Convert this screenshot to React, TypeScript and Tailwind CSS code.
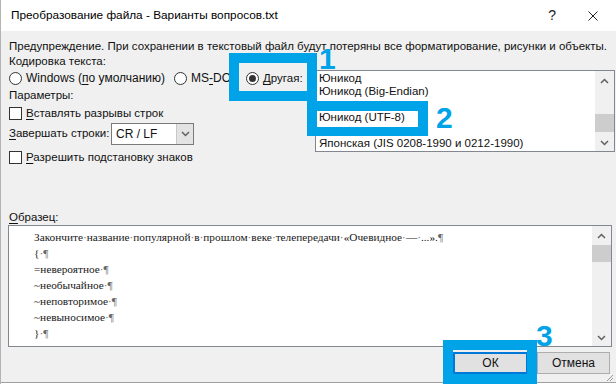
import React from 'react'

const sans = { fontFamily: '"Liberation Sans", Arial, sans-serif' }
const serif = { fontFamily: '"Liberation Serif", "Times New Roman", serif' }

const U: React.FC<{ children: React.ReactNode }> = ({ children }) => (
    <span className="underline underline-offset-[2px] decoration-1">{children}</span>
)

const Radio: React.FC<{ checked?: boolean }> = ({ checked }) => (
    <span className="w-[13px] h-[13px] rounded-full border border-[#333] bg-white flex items-center justify-center shrink-0">
        {checked && <span className="w-[7px] h-[7px] rounded-full bg-[#333]" />}
    </span>
)

const Checkbox: React.FC = () => (
    <span className="w-[13px] h-[13px] border border-[#333] bg-white shrink-0" />
)

const Chevron: React.FC<{ up?: boolean }> = ({ up }) => (
    <svg width="9" height="6" viewBox="0 0 9 6">
        <path d={up ? 'M1 5 L4.5 1.5 L8 5' : 'M1 1 L4.5 4.5 L8 1'} stroke="#606060" strokeWidth="1.5" fill="none" />
    </svg>
)

// word-style formatting marks in grey
const Marks: React.FC<{ text: string }> = ({ text }) => (
    <>
        {text.split(/([·¶])/).map((part, i) =>
            part === '·' || part === '¶'
                ? <span key={i} className="text-[#666]">{part}</span>
                : <span key={i}>{part}</span>
        )}
    </>
)

const sample = [
    'Закончите·название·популярной·в·прошлом·веке·телепередачи·«Очевидное·—·...».¶',
    '{·¶',
    '=невероятное·¶',
    '~необычайное·¶',
    '~неповторимое·¶',
    '~невыносимое·¶',
    '}·¶',
    '¶',
]

const App: React.FC = () => {
    return (
        <div className="w-[616px] h-[384px] relative bg-white flex flex-col overflow-hidden border-l border-[#b4b4b4] text-[11.5px] text-[#111]" style={sans}>
            {/* title bar */}
            <div className="h-[31px] shrink-0 flex items-center pl-[10px] bg-white">
                <p className="text-[11.8px] text-black">Преобразование файла - Варианты вопросов.txt</p>
                <span className="ml-auto text-[14px] text-[#222] mr-[32px]">?</span>
                <svg width="10" height="10" viewBox="0 0 10 10" className="mr-[18px]">
                    <path d="M0.5 0.5 L9.5 9.5 M9.5 0.5 L0.5 9.5" stroke="#222" strokeWidth="1" />
                </svg>
            </div>

            {/* body */}
            <div className="h-[352px] shrink-0 bg-[#f0f0f0] border-b border-[#a0a0a0] flex flex-col pl-[8px]">
                <p className="mt-[8px] h-[14px] leading-[14px] whitespace-nowrap">Предупреждение. При сохранении в текстовый файл будут потеряны все форматирование, рисунки и объекты.</p>
                <p className="mt-[1px] h-[14px] leading-[14px]">Кодировка текста:</p>

                <div className="mt-[2px] flex items-start">
                    <div className="w-[306px] pt-[1px] flex flex-col">
                        <div className="h-[14px] flex items-center leading-[14px] whitespace-nowrap">
                            <div className="w-[165px] flex items-center gap-[4px]">
                                <Radio />
                                <span className="text-[12px]">Windows (<U>п</U>о умолчанию)</span>
                            </div>
                            <div className="w-[72px] flex items-center gap-[4px]">
                                <Radio />
                                <span className="text-[12px]">MS<U>-</U>DOS</span>
                            </div>
                            <div className="flex items-center gap-[4px]">
                                <Radio checked />
                                <span><U>Д</U>ругая:</span>
                            </div>
                        </div>
                        <p className="mt-[3px] h-[14px] leading-[14px]">Параметры:</p>
                        <div className="mt-[4px] h-[14px] flex items-center gap-[4px] leading-[14px]">
                            <Checkbox />
                            <span><U>В</U>ставлять разрывы строк</span>
                        </div>
                        <div className="mt-[3px] h-[22px] flex items-center whitespace-nowrap">
                            <span className="w-[102px] shrink-0"><U>З</U>авершать строки:</span>
                            <div className="w-[83px] h-[22px] border border-[#7a7a7a] bg-white flex items-center">
                                <span className="pl-[4px] flex-1 text-[12px]">CR / LF</span>
                                <span className="w-[17px] h-full bg-[#e3e3e3] border-l border-[#c8c8c8] flex items-center justify-center">
                                    <Chevron />
                                </span>
                            </div>
                        </div>
                        <div className="mt-[5px] h-[14px] flex items-center gap-[4px] leading-[14px]">
                            <Checkbox />
                            <span><U>Р</U>азрешить подстановку знаков</span>
                        </div>
                    </div>

                    {/* encoding list */}
                    <div className="w-[300px] h-[82px] border border-[#828790] bg-white flex">
                        <div className="flex-1 pt-[1px] pl-[3px] leading-[13px] whitespace-nowrap">
                            <p className="h-[13px]">Юникод</p>
                            <p className="h-[13px]">Юникод (Big-Endian)</p>
                            <p className="h-[13px]"></p>
                            <p className="h-[13px]">Юникод (UTF-8)</p>
                            <p className="h-[13px]"></p>
                            <p className="h-[13px]">Японская (JIS 0208-1990 и 0212-1990)</p>
                        </div>
                        <div className="w-[19px] bg-[#f0f0f0] flex flex-col">
                            <div className="h-[20px] flex items-center justify-center"><Chevron up /></div>
                            <div className="flex-1">
                                <div className="mt-[23px] h-[18px] bg-[#cdcdcd]" />
                            </div>
                            <div className="h-[17px] flex items-center justify-center"><Chevron /></div>
                        </div>
                    </div>
                </div>

                <p className="mt-[46px] h-[14px] leading-[14px]"><U>О</U>бразец:</p>

                {/* preview */}
                <div className="mt-[1px] ml-[-1px] w-[604px] h-[122px] border border-[#828790] bg-white flex overflow-hidden">
                    <div className="flex-1 pt-[3px] pl-[25px] text-[11.3px] leading-[16px] text-[#1a1a1a] whitespace-nowrap overflow-hidden" style={serif}>
                        {sample.map((line, i) => (
                            <p key={i}><Marks text={line} /></p>
                        ))}
                    </div>
                    <div className="w-[19px] bg-[#f0f0f0] flex flex-col">
                        <div className="h-[19px] flex items-center justify-center"><Chevron up /></div>
                        <div className="flex-1">
                            <div className="h-[17px] bg-[#cdcdcd]" />
                        </div>
                        <div className="h-[17px] flex items-center justify-center"><Chevron /></div>
                    </div>
                </div>

                {/* buttons */}
                <div className="mt-[5px] flex justify-end gap-[9px] mr-[6px]">
                    <button className="w-[75px] h-[22px] bg-[#e1e1e1] border-2 border-[#0078d7] text-[12px]">ОК</button>
                    <button className="w-[73px] h-[22px] bg-[#e1e1e1] border border-[#adadad] text-[12px]">Отмена</button>
                </div>
            </div>
            <div className="h-px bg-white" />

            {/* resize grip */}
            <svg width="10" height="10" viewBox="0 0 10 10" className="absolute right-[2px] bottom-[2px]">
                <path d="M9 3 L3 9 M9 6 L6 9" stroke="#9a9a9a" strokeWidth="1" />
            </svg>

            {/* annotation frames */}
            <div className="absolute left-[228px] top-[53px] w-[88px] h-[48px] border-[10px] border-[#00a2e8]" />
            <div className="absolute left-[306px] top-[101px] w-[121px] h-[35px] border-[10px] border-b-[9px] border-[#00a2e8]" />
            <div className="absolute left-[442px] top-[340px] w-[94px] h-[44px] border-[10px] border-[#00a2e8]" />
            <span className="absolute left-[318px] top-[44px] text-[30px] leading-[30px] font-bold text-[#00a2e8]">1</span>
            <span className="absolute left-[435px] top-[103px] text-[30px] leading-[30px] font-bold text-[#00a2e8]">2</span>
            <span className="absolute left-[535px] top-[321px] text-[30px] leading-[30px] font-bold text-[#00a2e8]">3</span>
        </div>
    )
}

export default App
